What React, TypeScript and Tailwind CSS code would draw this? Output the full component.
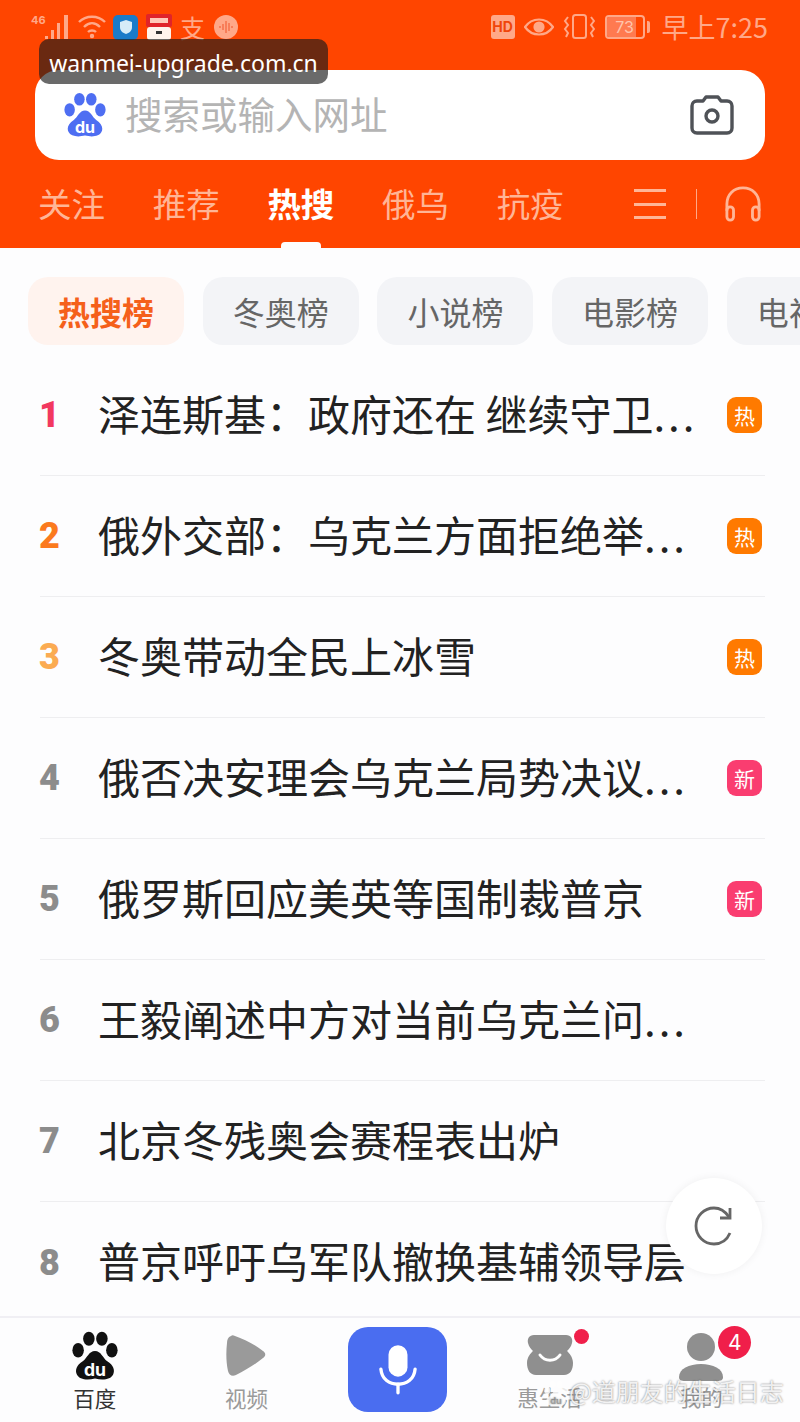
import React from 'react';

const tabs = ['关注', '推荐', '热搜', '俄乌', '抗疫'];
const chips = ['热搜榜', '冬奥榜', '小说榜', '电影榜', '电视榜'];

type Tag = '热' | '新' | null;

const rows: { title: string; more?: boolean; tag: Tag; color: string }[] = [
  { title: '泽连斯基\uff1a政府还在 继续守卫', more: true, tag: '热', color: 'text-[#f2385f]' },
  { title: '俄外交部\uff1a乌克兰方面拒绝举', more: true, tag: '热', color: 'text-[#fb7a1e]' },
  { title: '冬奥带动全民上冰雪', tag: '热', color: 'text-[#fbab52]' },
  { title: '俄否决安理会乌克兰局势决议', more: true, tag: '新', color: 'text-[#8c8c8c]' },
  { title: '俄罗斯回应美英等国制裁普京', tag: '新', color: 'text-[#8c8c8c]' },
  { title: '王毅阐述中方对当前乌克兰问', more: true, tag: null, color: 'text-[#8c8c8c]' },
  { title: '北京冬残奥会赛程表出炉', tag: null, color: 'text-[#8c8c8c]' },
  { title: '普京呼吁乌军队撤换基辅领导层', tag: null, color: 'text-[#8c8c8c]' },
];

// Baidu paw mark, shared by the search bar, the bottom nav and the watermark
const Paw: React.FC<{ fill: string; inner?: string; className?: string }> = ({ fill, inner = '#fff', className }) => (
  <svg viewBox="0 0 120 126" className={className}>
    <g fill={fill}>
      <ellipse cx="16" cy="48" rx="15" ry="19" />
      <ellipse cx="44" cy="18" rx="15" ry="18" />
      <ellipse cx="78" cy="18" rx="15" ry="18" />
      <ellipse cx="104" cy="48" rx="15" ry="19" />
      <path d="M60 50C44 50 40 68 28 77C12 87 7 100 13 112C19 124 38 127 60 122C82 127 101 124 107 112C113 100 108 87 92 77C80 68 76 50 60 50Z" />
    </g>
    <text x="60" y="114" textAnchor="middle" fill={inner} fontSize="46" fontWeight="700" fontFamily="Inter, sans-serif">
      du
    </text>
  </svg>
);

const StatusLeft = () => (
  <div className="flex items-center">
    <svg viewBox="0 0 40 28" className="ml-[31px] w-[40px] h-[28px]" fill="#ffa888">
      <text x="0" y="11" fontSize="11" fontWeight="700" fontFamily="Inter, sans-serif">46</text>
      <rect x="14" y="23" width="3" height="3" />
      <rect x="20" y="17" width="3" height="9" />
      <rect x="26" y="10" width="3" height="16" />
      <rect x="33" y="2" width="4" height="24" />
    </svg>
    <svg viewBox="0 0 30 26" className="ml-[6px] w-[30px] h-[26px]" fill="none" stroke="#ffa888" strokeWidth="2.4">
      <path d="M2 8C9 1 21 1 28 8" />
      <path d="M7 13C12 8 18 8 23 13" />
      <path d="M11 18C13 16 17 16 19 18" />
      <circle cx="15" cy="22" r="1" />
    </svg>
    <div className="ml-[6px] w-[25px] h-[25px] rounded-[5px] bg-[#1a7bc9] flex items-center justify-center">
      <svg viewBox="0 0 16 16" className="w-[16px] h-[16px]">
        <path d="M8 1L14 3V8C14 12 11 14 8 15C5 14 2 12 2 8V3Z" fill="#d6ecf8" />
      </svg>
    </div>
    <svg viewBox="0 0 26 26" className="ml-[8px] w-[26px] h-[26px]">
      <rect x="0" y="0" width="26" height="13" rx="2" fill="#e0242a" />
      <rect x="4" y="4" width="18" height="5" fill="#ffc9b8" />
      <rect x="1" y="13" width="24" height="13" rx="3" fill="#fff3ec" />
      <rect x="10" y="17" width="6" height="3" fill="#333" />
    </svg>
    <span className="ml-[8px] w-[26px] text-[25px] leading-none text-[#ffa888]">支</span>
    <div className="ml-[8px] w-[24px] h-[24px] rounded-full bg-[#ffa888] flex items-center justify-center">
      <svg viewBox="0 0 16 16" className="w-[16px] h-[16px]" stroke="#f0552a" strokeWidth="1">
        <path d="M2 7V9M5 5V11M8 2V14M11 4V12M14 7V9" />
      </svg>
    </div>
  </div>
);

const StatusRight = () => (
  <div className="flex items-center text-[#ffa888]">
    <div className="w-[24px] h-[24px] rounded-[3px] bg-[#ffa888] flex items-center justify-center text-[14px] font-bold font-['Inter',sans-serif] text-[#f0450a]">
      HD
    </div>
    <svg viewBox="0 0 30 20" className="ml-[9px] w-[30px] h-[20px]" fill="none" stroke="#ffa888" strokeWidth="2.2">
      <path d="M1 10C8 0 22 0 29 10C22 20 8 20 1 10Z" />
      <circle cx="15" cy="10" r="4.5" fill="#ffa888" />
    </svg>
    <svg viewBox="0 0 32 26" className="ml-[9px] w-[32px] h-[26px]" fill="none" stroke="#ffa888" strokeWidth="2">
      <rect x="10" y="1" width="13" height="23" rx="2.5" />
      <path d="M5 3L2 7L5 11L2 15L5 19L3 23" />
      <path d="M28 3L31 7L28 11L31 15L28 19L30 23" />
    </svg>
    <div className="ml-[10px] w-[40px] h-[24px] rounded-[4px] border-2 border-[#ffa888] flex items-center overflow-hidden relative">
      <div className="w-[29px] h-full bg-[#ff7a50]" />
      <span className="absolute inset-0 flex items-center justify-center text-[16px] leading-none font-['Inter',sans-serif] text-[#ffc4ac]">
        73
      </span>
    </div>
    <div className="ml-[2px] w-[3px] h-[12px] rounded-r-[2px] bg-[#ffa888]" />
    <span className="ml-[12px] text-[27px] leading-none">早上7:25</span>
  </div>
);

const BottomNav = () => (
  <div className="h-[106px] shrink-0 border-t-2 border-[#f0eff4] pl-[19px] pr-[23px] grid grid-cols-5 bg-[#fdfdfe]">
    <div className="flex flex-col items-center pt-[13px]">
      <Paw fill="#111" className="w-[46px] h-[50px]" />
      <span className="mt-[2px] text-[21.5px] leading-[30px] text-[#333]">百度</span>
    </div>
    <div className="flex flex-col items-center pt-[16px]">
      <svg viewBox="0 0 40 44" className="w-[40px] h-[44px]">
        <path d="M5 2C2 3 1 6 1 9C0 18 0 28 2 37C3 41 6 43 10 41C20 36 30 30 37 24C40 22 40 19 37 17C28 10 18 5 9 2C7 1 6 1 5 2Z" fill="#9a9a9a" />
      </svg>
      <span className="mt-[5px] text-[21.5px] leading-[30px] text-[#9a9a9a]">视频</span>
    </div>
    <div className="flex justify-center pt-[9px]">
      <div className="w-[99px] h-[85px] rounded-[20px] bg-[#4a6df0] flex items-center justify-center">
        <svg viewBox="0 0 40 52" className="w-[38px] h-[50px]" fill="none" stroke="#fff" strokeWidth="3.5" strokeLinecap="round">
          <rect x="10" y="0" width="20" height="33" rx="10" fill="#fff" stroke="none" />
          <path d="M2 25C3 36 11 41 20 41C29 41 37 36 38 25" />
          <path d="M20 41V50" />
        </svg>
      </div>
    </div>
    <div className="flex flex-col items-center pt-[17px]">
      <div className="relative">
        <svg viewBox="0 0 46 40" className="w-[46px] h-[40px]">
          <path d="M7 0H39C44 0 46 4 45 8C44 12 42 14 40 16C42 18 46 22 46 28C46 35 43 40 37 40H9C3 40 0 35 0 28C0 22 4 18 6 16C4 14 2 12 1 8C0 4 2 0 7 0Z" fill="#8f8f8f" />
          <path d="M13 20C18 27 28 27 33 20" fill="none" stroke="#fff" strokeWidth="3" strokeLinecap="round" />
        </svg>
        <div className="absolute -top-[6px] -right-[16px] w-[15px] h-[15px] rounded-full bg-[#f01f4a]" />
      </div>
      <span className="mt-[7px] text-[21.5px] leading-[30px] text-[#9a9a9a]">惠生活</span>
    </div>
    <div className="flex flex-col items-center pt-[15px]">
      <div className="relative">
        <svg viewBox="0 0 44 48" className="w-[44px] h-[48px]" fill="#8f8f8f">
          <circle cx="22" cy="14" r="14" />
          <path d="M0 44C0 36 10 31 22 31C34 31 44 36 44 44C44 47 42 48 38 48H6C2 48 0 47 0 44Z" />
        </svg>
        <div className="absolute -top-[7px] -right-[28px] w-[33px] h-[33px] rounded-full bg-[#f01f4a] flex items-center justify-center text-[21px] leading-none text-white font-['Inter',sans-serif]">
          4
        </div>
      </div>
      <span className="mt-[1px] text-[21.5px] leading-[30px] text-[#9a9a9a]">我的</span>
    </div>
  </div>
);

export default function App() {
  return (
    <div className="relative w-[800px] h-[1422px] overflow-hidden flex flex-col bg-[#fdfdfe] font-['Noto_Sans_CJK_SC','Noto_Sans',sans-serif]">
      <header className="h-[248px] shrink-0 bg-[#ff4500] flex flex-col">
        <div className="h-[52px] pt-[13px] flex items-start justify-between pr-[32px]">
          <StatusLeft />
          <StatusRight />
        </div>
        <div className="mt-[18px] mx-[35px] h-[90px] rounded-[24px] bg-white flex items-center pl-[29px] pr-[31px]">
          <Paw fill="#4e6ef2" className="w-[42px] h-[44px]" />
          <span className="ml-[19px] pb-[5px] text-[37.5px] leading-none text-[#b4b4b4]">搜索或输入网址</span>
          <svg viewBox="0 0 44 40" className="ml-auto w-[44px] h-[40px]" fill="none" stroke="#4f5257" strokeWidth="3.4" strokeLinejoin="round">
            <path d="M7 6H13L16 2H28L31 6H37C40 6 42 8 42 11V33C42 36 40 38 37 38H7C4 38 2 36 2 33V11C2 8 4 6 7 6Z" />
            <circle cx="22" cy="21" r="6" />
          </svg>
        </div>
        <nav className="flex-1 flex items-center pl-[38px] text-[33.5px] leading-none text-[#ffb596]">
          {tabs.map((t, i) => (
            <span key={t} className={`relative mr-[47.7px] w-[67px] pb-[2px] whitespace-nowrap ${i === 2 ? 'font-bold text-white' : ''}`}>
              {t}
              {i === 2 && (
                <span className="absolute left-[14px] -bottom-[27px] w-[40px] h-[7px] rounded-t-[4px] bg-[#fdfdfd]" />
              )}
            </span>
          ))}
          <div className="ml-[23px] w-[32px] h-[30px] flex flex-col justify-between">
            <div className="h-[3px] bg-[#ffb596]" />
            <div className="h-[3px] bg-[#ffb596]" />
            <div className="h-[3px] bg-[#ffb596]" />
          </div>
          <div className="ml-[30px] w-[1px] h-[30px] bg-[#ffa888]" />
          <svg viewBox="0 0 40 38" className="ml-[27px] w-[38px] h-[36px]" fill="none" stroke="#ffb596" strokeWidth="3">
            <path d="M3 26V19C3 9 10 2 20 2C30 2 37 9 37 19V26" />
            <rect x="3" y="22" width="7" height="14" rx="3.5" />
            <rect x="30" y="22" width="7" height="14" rx="3.5" />
          </svg>
        </nav>
      </header>

      <div className="pt-[29px] pl-[28px] flex gap-[18.7px] overflow-hidden shrink-0">
        {chips.map((c, i) => (
          <div
            key={c}
            className={`shrink-0 h-[68px] px-[30px] rounded-[20px] flex items-center text-[32px] leading-none whitespace-nowrap ${
              i === 0 ? 'bg-[#fff3ee] text-[#f5601a] font-bold' : 'bg-[#f3f4f7] text-[#666]'
            }`}
          >
            {c}
          </div>
        ))}
      </div>

      <div className="flex-1 min-h-0 overflow-hidden pt-[10px] pr-[35px] pl-[40px]">
        {rows.map((r, i) => (
          <div
            key={r.title}
            className={`h-[121px] flex items-center pr-[3px] ${i < rows.length - 1 ? 'border-b border-[#eeeef0]' : ''}`}
          >
            <span className={`w-[59px] -ml-[1px] shrink-0 text-[36px] leading-none font-black font-['Roboto',sans-serif] ${r.color}`}>
              {i + 1}
            </span>
            <span className="pb-[5px] text-[42px] leading-none text-[#222] whitespace-nowrap">
              {r.title}
              {r.more && <span className="tracking-[3px]">...</span>}
            </span>
            {r.tag && (
              <span
                className={`ml-auto w-[35px] h-[36px] rounded-[9px] flex items-center justify-center text-[21px] leading-none text-white ${
                  r.tag === '热' ? 'bg-[#ff7a00]' : 'bg-[#fa3d70]'
                }`}
              >
                {r.tag}
              </span>
            )}
          </div>
        ))}
      </div>

      <BottomNav />

      {/* Overlays: link toast, refresh button, account watermark */}
      <div className="absolute left-[39px] top-[39px] w-[289px] h-[45px] pt-[3px] rounded-[10px] bg-[#1a1a1a]/65 flex items-center justify-center text-[23px] leading-none text-white font-['Noto_Sans',sans-serif]">
        wanmei-upgrade.com.cn
      </div>
      <div className="absolute left-[666px] top-[1178px] w-[96px] h-[96px] rounded-full bg-white shadow-[0_0_8px_rgba(0,0,0,0.06)] flex items-center justify-center">
        <svg viewBox="0 0 40 40" className="w-[40px] h-[40px]" fill="none" stroke="#666" strokeWidth="2.8">
          <path d="M35 11C31 5 26 2 20 2C10 2 2 10 2 20C2 30 10 38 20 38C27 38 33 34 36 27" />
          <path d="M36 2V12H26" />
        </svg>
      </div>
      <div className="absolute left-[543px] top-[1379px] flex items-center text-[24px] leading-none text-white/85 [text-shadow:0_0_2px_rgba(0,0,0,0.55)]">
        <Paw fill="#ffffff" inner="#888" className="w-[26px] h-[25px] opacity-80" />
        <span className="pb-[5px]">@道朋友的生活日志</span>
      </div>
    </div>
  );
}
